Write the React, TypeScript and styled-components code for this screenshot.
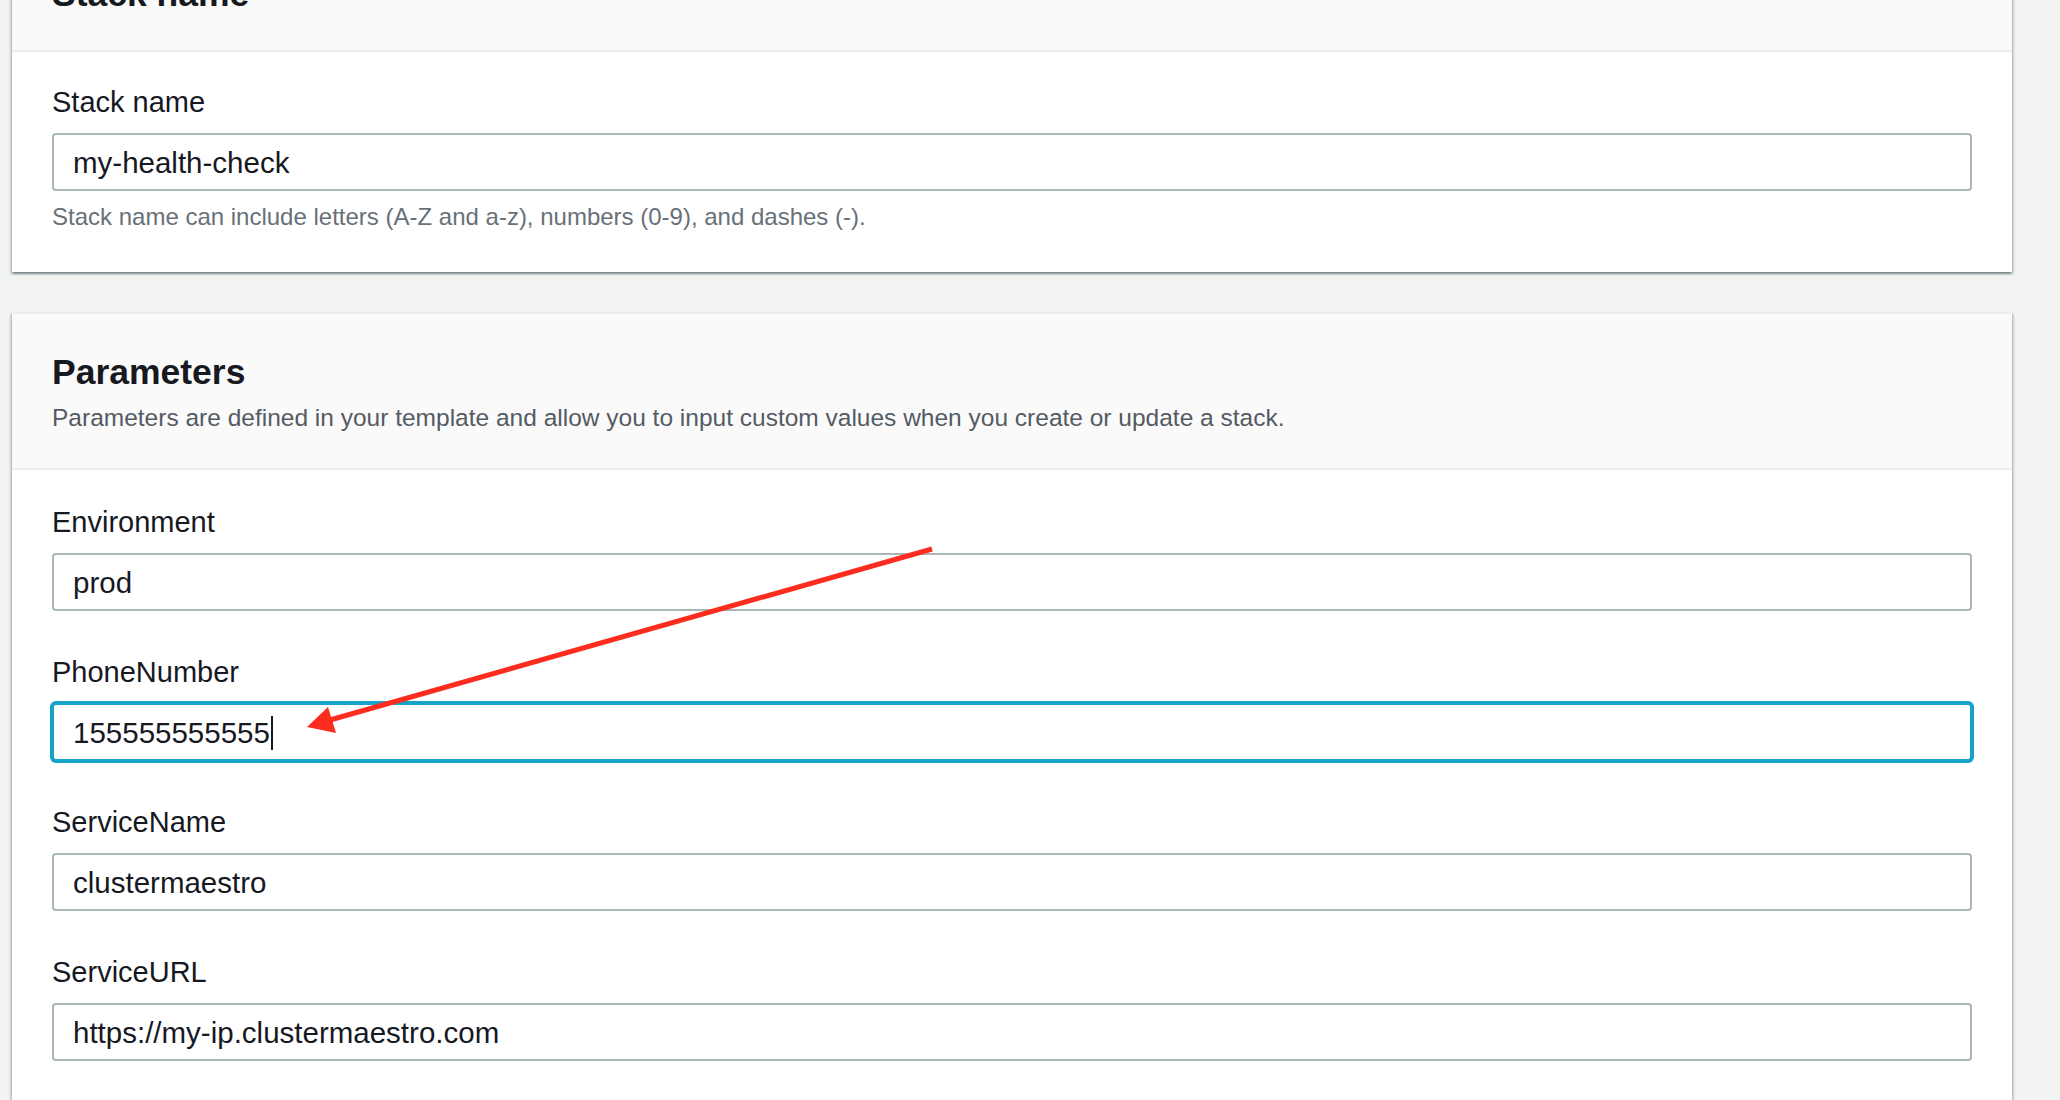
import React from 'react';
import styled, { createGlobalStyle, css } from 'styled-components';

const GlobalStyle = createGlobalStyle`
  html, body {
    margin: 0;
    padding: 0;
    background: #f2f3f3;
  }
  body {
    font-family: "Liberation Sans", Arial, sans-serif;
    color: #16191f;
  }
  * { box-sizing: border-box; }
`;

const Viewport = styled.div`
  position: relative;
  width: 2060px;
  height: 1100px;
  overflow: hidden;
  background: #f2f3f3;
`;

const Page = styled.main`
  display: flex;
  flex-direction: column;
  gap: 40px;
  width: 2000px;
  margin: -66px 0 0 12px;
`;

const Card = styled.section`
  background: #ffffff;
  border-top: 2px solid #eaeded;
  box-shadow: 0 2px 2px 0 rgba(0, 28, 36, 0.3), 2px 2px 2px 0 rgba(0, 28, 36, 0.15),
    -2px 2px 2px 0 rgba(0, 28, 36, 0.15);
`;

const CardHeader = styled.header`
  background: #fafafa;
  padding: 35px 40px 33px;
  border-bottom: 2px solid #eaeded;
`;

const Title = styled.h2`
  margin: 0;
  font-size: 35.5px;
  font-weight: 700;
  line-height: 46px;
  color: #16191f;
`;

const Description = styled.p`
  margin: 6px 0 0;
  font-size: 24.5px;
  line-height: 34px;
  color: #545b64;
`;

const CardBody = styled.div<{ $top?: number }>`
  display: flex;
  flex-direction: column;
  gap: 41px;
  padding: ${(p) => p.$top ?? 31}px 40px 38px;
`;

const Field = styled.div`
  display: flex;
  flex-direction: column;
`;

const Label = styled.label`
  display: block;
  font-size: 29px;
  line-height: 40px;
  margin-bottom: 11px;
  color: #16191f;
`;

const InputBox = styled.div<{ $focused?: boolean }>`
  display: flex;
  align-items: center;
  height: 58px;
  width: 1920px;
  padding: 2px 20px 0 19px;
  border: 2px solid #aab7b8;
  border-radius: 4px;
  background: #ffffff;
  font-size: 29.5px;
  color: #16191f;
  ${(p) =>
    p.$focused &&
    css`
      border-color: #17a2c9;
      box-shadow: 0 0 0 2px #17a2c9;
    `}
`;

const Caret = styled.span`
  display: inline-block;
  width: 2px;
  height: 34px;
  margin-left: 1px;
  background: #16191f;
`;

const Help = styled.div`
  margin-top: 9px;
  font-size: 24px;
  line-height: 34px;
  color: #687078;
`;

const Overlay = styled.svg`
  position: absolute;
  top: 0;
  left: 0;
  pointer-events: none;
`;

type FieldProps = { label: string; value: string; focused?: boolean; help?: string };

function TextField({ label, value, focused, help }: FieldProps) {
  return (
    <Field>
      <Label>{label}</Label>
      <InputBox role="textbox" $focused={focused}>
        <span>{value}</span>
        {focused && <Caret />}
      </InputBox>
      {help && <Help>{help}</Help>}
    </Field>
  );
}

export default function App() {
  return (
    <Viewport>
      <GlobalStyle />
      <Page>
        <Card>
          <CardHeader>
            <Title>Stack name</Title>
          </CardHeader>
          <CardBody $top={30}>
            <TextField
              label="Stack name"
              value="my-health-check"
              help="Stack name can include letters (A-Z and a-z), numbers (0-9), and dashes (-)."
            />
          </CardBody>
        </Card>
        <Card>
          <CardHeader>
            <Title>Parameters</Title>
            <Description>
              Parameters are defined in your template and allow you to input custom values when you create or update a stack.
            </Description>
          </CardHeader>
          <CardBody $top={32}>
            <TextField label="Environment" value="prod" />
            <TextField label="PhoneNumber" value="155555555555" focused />
            <TextField label="ServiceName" value="clustermaestro" />
            <TextField label="ServiceURL" value="https://my-ip.clustermaestro.com" />
            <TextField label="" value="" />
          </CardBody>
        </Card>
      </Page>
      <Overlay width="2060" height="1100" viewBox="0 0 2060 1100">
        <line x1="932" y1="549" x2="330" y2="720" stroke="#fc2d1f" strokeWidth="5" />
        <polygon points="307,727 328,707 336,733" fill="#fc2d1f" />
      </Overlay>
    </Viewport>
  );
}
